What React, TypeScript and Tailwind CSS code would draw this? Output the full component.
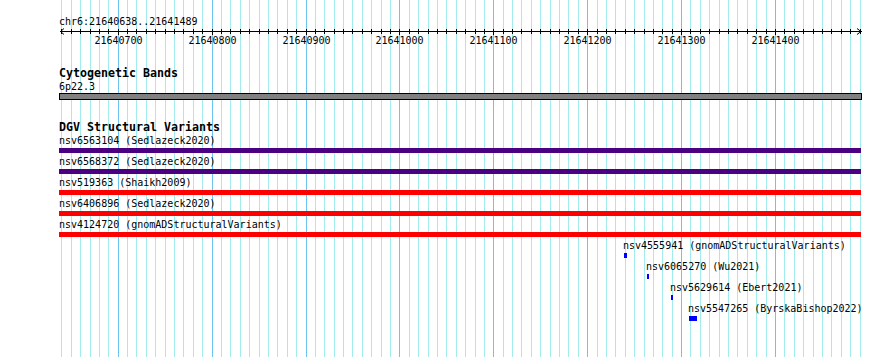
import React from "react";

const START = 21640638;
const X0 = 60;
const SCALE = 800 / 852;
const px = (bp: number) => X0 + (bp - START) * SCALE;

const gridBps: number[] = [];
for (let b = 21640640; b <= 21641490; b += 10) gridBps.push(b);
const majors = gridBps.filter((b) => b % 100 === 0);

const fullRows = [
  { name: "nsv6563104 (Sedlazeck2020)", color: "bg-[#4b0082]" },
  { name: "nsv6568372 (Sedlazeck2020)", color: "bg-[#4b0082]" },
  { name: "nsv519363 (Shaikh2009)", color: "bg-[#ff0000]" },
  { name: "nsv6406896 (Sedlazeck2020)", color: "bg-[#ff0000]" },
  { name: "nsv4124720 (gnomADStructuralVariants)", color: "bg-[#ff0000]" },
];

const smallRows = [
  { name: "nsv4555941 (gnomADStructuralVariants)", x: 624, w: 3 },
  { name: "nsv6065270 (Wu2021)", x: 647, w: 2 },
  { name: "nsv5629614 (Ebert2021)", x: 671, w: 2 },
  { name: "nsv5547265 (ByrskaBishop2022)", x: 689, w: 8 },
];

function Grid() {
  return (
    <svg
      className="absolute inset-0"
      width={890}
      height={357}
      shapeRendering="crispEdges"
    >
      {gridBps.map((b) => {
        const x = Math.floor(px(b)) + 0.5;
        return (
          <line
            key={b}
            x1={x}
            x2={x}
            y1={0}
            y2={357}
            stroke={b % 100 === 0 ? "#6cc4f0" : "#a2ecee"}
            strokeWidth={1}
          />
        );
      })}
    </svg>
  );
}

function Ruler() {
  const y = 3.5;
  return (
    <svg className="block" width={890} height={20}>
      <g shapeRendering="crispEdges" stroke="#000" strokeWidth={1}>
        <line x1={60} x2={862} y1={y} y2={y} />
        {gridBps.map((b) => {
          const x = Math.floor(px(b)) + 0.5;
          const major = b % 100 === 0;
          return (
            <line
              key={b}
              x1={x}
              x2={x}
              y1={major ? 0.5 : 1}
              y2={major ? 7 : 6}
            />
          );
        })}
      </g>
      <g stroke="#000" strokeWidth={1} fill="none">
        <polyline points="64,0.5 60.5,3.5 64,6.5" />
        <polyline points="857,0.5 861,3.5 857,6.5" />
      </g>
      {majors.map((b) => (
        <text
          key={b}
          x={Math.floor(px(b)) + 0.5}
          y={16}
          textAnchor="middle"
          fontFamily="'DejaVu Sans Mono', monospace"
          fontSize={10}
          fill="#000"
        >
          {b}
        </text>
      ))}
    </svg>
  );
}

export default function App() {
  return (
    <div className="relative w-[890px] h-[357px] overflow-hidden bg-white text-black font-['DejaVu_Sans_Mono',monospace] text-[10px] leading-[13px] whitespace-nowrap">
      <Grid />
      <div className="relative flex flex-col pt-[15px]">
        <div className="h-[13px] pl-[59px]">chr6:21640638..21641489</div>
        <Ruler />
        <div className="mt-[19px] h-[13px] pl-[59px] font-bold text-[11.63px] leading-[13px]">
          Cytogenetic Bands
        </div>
        <div className="h-[13px] pl-[59px]">6p22.3</div>
        <div className="ml-[59px] w-[803px] h-[7px] border border-black bg-[#808080]" />
        <div className="mt-[21px] h-[13px] pl-[59px] font-bold text-[11.63px] leading-[13px]">
          DGV Structural Variants
        </div>
        {fullRows.map((r) => (
          <div key={r.name} className="flex flex-col h-[21px]">
            <div className="h-[13px] pl-[59px]">{r.name}</div>
            <div className={`mt-px ml-[59px] w-[802px] h-[5px] ${r.color}`} />
          </div>
        ))}
        {smallRows.map((r) => (
          <div key={r.name} className="flex flex-col h-[21px]">
            <div className="h-[13px]" style={{ paddingLeft: r.x - 1 }}>
              {r.name}
            </div>
            <div
              className="mt-px h-[5px] bg-[#0000ff]"
              style={{ marginLeft: r.x, width: r.w }}
            />
          </div>
        ))}
      </div>
    </div>
  );
}
